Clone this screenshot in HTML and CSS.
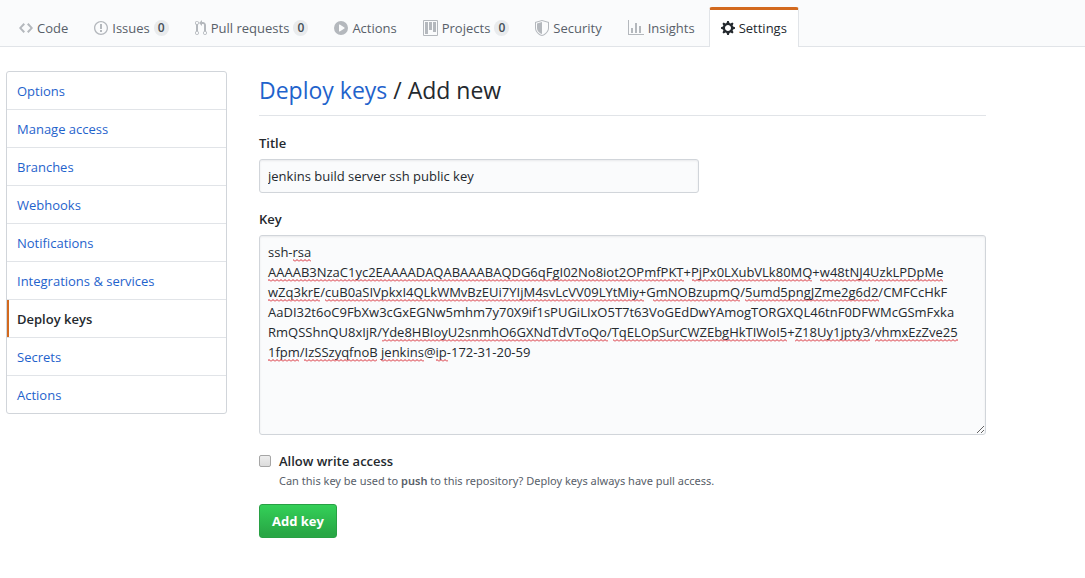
FILE: index.html
```html
<!DOCTYPE html>
<html lang="en">
<head>
<meta charset="utf-8">
<meta name="viewport" content="width=device-width, initial-scale=1">
<title>Add new deploy key</title>
<link rel="stylesheet" href="styles.css">
</head>
<body>
<header class="repo-head">
  <nav class="tabs" aria-label="Repository">
    <a class="tab" href="#code"><svg width="14" height="16" viewBox="0 0 14 16" aria-hidden="true"><path fill-rule="evenodd" d="M9.5 3L8 4.5 11.5 8 8 11.5 9.5 13 14 8 9.5 3zm-5 0L0 8l4.500 5L6 11.500 2.500 8 6 4.500 4.500 3z"/></svg><span>Code</span></a>
    <a class="tab" href="#issues"><svg width="14" height="16" viewBox="0 0 14 16" aria-hidden="true"><path fill-rule="evenodd" d="M7 2.300c3.140 0 5.700 2.560 5.700 5.700s-2.560 5.700-5.700 5.700A5.710 5.710 0 0 1 1.300 8c0-3.140 2.560-5.700 5.700-5.700zM7 1C3.140 1 0 4.140 0 8s3.140 7 7 7 7-3.140 7-7-3.140-7-7-7zm1 3H6v5h2V4zm0 6H6v2h2v-2z"/></svg><span>Issues</span><span class="counter">0</span></a>
    <a class="tab" href="#pulls"><svg width="12" height="16" viewBox="0 0 12 16" aria-hidden="true"><path fill-rule="evenodd" d="M11 11.280V5c-.03-.78-.34-1.470-.94-2.060C9.460 2.350 8.780 2.030 8 2H7V0L4 3l3 3V4h1c.27.02.48.11.69.31.21.2.3.42.31.69v6.280A1.993 1.993 0 0 0 10 15a1.993 1.993 0 0 0 1-3.720zm-1 2.920c-.66 0-1.200-.55-1.200-1.200 0-.65.55-1.200 1.200-1.200.65 0 1.200.55 1.200 1.200 0 .65-.55 1.200-1.200 1.200zM4 3c0-1.110-.89-2-2-2a1.993 1.993 0 0 0-1 3.720v6.560A1.993 1.993 0 0 0 2 15a1.993 1.993 0 0 0 1-3.720V4.720c.59-.34 1-.98 1-1.720zm-.8 10c0 .66-.55 1.200-1.200 1.200-.65 0-1.200-.55-1.200-1.200 0-.65.55-1.200 1.200-1.200.65 0 1.200.55 1.200 1.200zM2 4.200C1.340 4.200.8 3.650.8 3c0-.65.55-1.200 1.200-1.200.65 0 1.200.55 1.200 1.200 0 .65-.55 1.200-1.200 1.200z"/></svg><span>Pull requests</span><span class="counter">0</span></a>
    <a class="tab" href="#actions"><svg width="14" height="16" viewBox="0 0 14 16" aria-hidden="true"><path fill-rule="evenodd" d="M14 8A7 7 0 1 1 0 8a7 7 0 0 1 14 0zm-8.223 3.482l4.599-3.066a.5.5 0 0 0 0-.832L5.777 4.518A.5.5 0 0 0 5 4.934v6.132a.5.5 0 0 0 .777.416z"/></svg><span>Actions</span></a>
    <a class="tab" href="#projects"><svg width="15" height="16" viewBox="0 0 15 16" aria-hidden="true"><path fill-rule="evenodd" d="M10 12h3V2h-3v10zm-4-2h3V2H6v8zm-4 4h3V2H2v12zm-1 1h13V1H1v14zM14 0H1a1 1 0 0 0-1 1v14a1 1 0 0 0 1 1h13a1 1 0 0 0 1-1V1a1 1 0 0 0-1-1z"/></svg><span>Projects</span><span class="counter">0</span></a>
    <a class="tab" href="#security"><svg width="14" height="16" viewBox="0 0 14 16" aria-hidden="true"><path fill-rule="evenodd" d="M0 2l7-2 7 2v6.020C14 12.690 8.690 16 7 16c-1.690 0-7-3.310-7-7.980V2zm1 .75L7 1l6 1.750v5.268C13 12.104 8.449 15 7 15c-1.449 0-6-2.896-6-6.982V2.750zm1 .75L7 2v12c-1.207 0-5-2.482-5-5.985V3.500z"/></svg><span>Security</span></a>
    <a class="tab" href="#insights"><svg width="16" height="16" viewBox="0 0 16 16" aria-hidden="true"><path fill-rule="evenodd" d="M16 14v1H0V0h1v14h15zM5 13H3V8h2v5zm4 0H7V3h2v10zm4 0h-2V6h2v7z"/></svg><span>Insights</span></a>
    <a class="tab tab-selected" href="#settings" aria-current="page"><svg width="14" height="16" viewBox="0 0 14 16" aria-hidden="true"><path fill-rule="evenodd" d="M14 8.770v-1.600l-1.940-.64-.45-1.090.88-1.840-1.130-1.130-1.810.91-1.090-.45-.69-1.920h-1.600l-.63 1.940-1.110.45-1.840-.88-1.130 1.130.91 1.810-.45 1.090L0 7.230v1.590l1.940.64.45 1.090-.88 1.840 1.130 1.130 1.810-.91 1.090.45.69 1.920h1.590l.63-1.940 1.110-.45 1.840.88 1.130-1.130-.92-1.810.47-1.090L14 8.750v.02zM7 11c-1.660 0-3-1.340-3-3s1.340-3 3-3 3 1.340 3 3-1.340 3-3 3z"/></svg><span>Settings</span></a>
  </nav>
</header>
<div class="layout">
  <nav class="menu" aria-label="Settings">
    <a class="menu-item" href="#options">Options</a>
    <a class="menu-item" href="#access">Manage access</a>
    <a class="menu-item" href="#branches">Branches</a>
    <a class="menu-item" href="#webhooks">Webhooks</a>
    <a class="menu-item" href="#notifications">Notifications</a>
    <a class="menu-item" href="#integrations">Integrations &amp; services</a>
    <a class="menu-item menu-selected" href="#keys" aria-current="page">Deploy keys</a>
    <a class="menu-item" href="#secrets">Secrets</a>
    <a class="menu-item" href="#repo-actions">Actions</a>
  </nav>
  <main class="content">
    <h1 class="heading"><a href="#keys">Deploy keys</a> / Add new</h1>
    <form class="form">
      <label class="label" for="key-title">Title</label>
      <input class="field title-field" id="key-title" type="text" value="jenkins build server ssh public key" spellcheck="false">
      <label class="label" for="key-body">Key</label>
      <div class="key-box">
<textarea class="field key-field" id="key-body" spellcheck="false">ssh-rsa
AAAAB3NzaC1yc2EAAAADAQABAAABAQDG6qFgI02No8iot2OPmfPKT+PjPx0LXubVLk80MQ+w48tNJ4UzkLPDpMe
wZq3krE/cuB0aSIVpkxI4QLkWMvBzEUi7YIjM4svLcVV09LYtMiy+GmNOBzupmQ/5umd5pngJZme2g6d2/CMFCcHkF
AaDI32t6oC9FbXw3cGxEGNw5mhm7y70X9if1sPUGiLIxO5T7t63VoGEdDwYAmogTORGXQL46tnF0DFWMcGSmFxka
RmQSShnQU8xIjR/Yde8HBIoyU2snmhO6GXNdTdVToQo/TqELOpSurCWZEbgHkTIWoI5+Z18Uy1jpty3/vhmxEzZve25
1fpm/IzSSzyqfnoB jenkins@ip-172-31-20-59</textarea>
        <svg class="spelling" width="727" height="200" viewBox="0 0 727 200" aria-hidden="true">
          <defs>
            <pattern id="wave" width="4" height="4" patternUnits="userSpaceOnUse"><path d="M0 2.500L2 .5L4 2.500" fill="none" stroke="#d6202a"/></pattern>
          </defs>
          <g fill="url(#wave)">
            <rect x="34" y="24" width="18" height="4"/>
            <rect x="9" y="44" width="416" height="4"/>
            <rect x="433" y="44" width="120" height="4"/>
            <rect x="561" y="44" width="123" height="4"/>
            <rect x="9" y="64" width="52" height="4"/>
            <rect x="66" y="64" width="319" height="4"/>
            <rect x="394" y="64" width="87" height="4"/>
            <rect x="486" y="64" width="134" height="4"/>
            <rect x="123" y="104" width="226" height="4"/>
            <rect x="354" y="104" width="174" height="4"/>
            <rect x="536" y="104" width="75" height="4"/>
            <rect x="616" y="104" width="83" height="4"/>
            <rect x="9" y="124" width="31" height="4"/>
            <rect x="45" y="124" width="73" height="4"/>
            <rect x="122" y="124" width="43" height="4"/>
            <rect x="177" y="124" width="12" height="4"/>
          </g>
        </svg>
      </div>
      <div class="check-row">
        <input class="check" id="write" type="checkbox" aria-describedby="write-note">
        <div>
          <label class="label" for="write">Allow write access</label>
          <p class="note" id="write-note">Can this key be used to <strong>push</strong> to this repository? Deploy keys always have pull access.</p>
        </div>
      </div>
      <button class="submit" type="submit">Add key</button>
    </form>
  </main>
</div>
</body>
</html>
```
FILE: styles.css
```css
* {
  box-sizing: border-box;
}

body {
  margin: 0;
  background: #fff;
  color: #24292e;
  font: 13px/20px "Open Sans", "Noto Sans", sans-serif;
}

a {
  color: #1f63cc;
  text-decoration: none;
}

.repo-head {
  padding: 7px 7px 0;
  background: #fafbfc;
  border-bottom: 1px solid #e1e4e8;
}

.tabs {
  display: flex;
  gap: 2px;
  margin-bottom: -1px;
}

.tab {
  display: flex;
  align-items: center;
  gap: 4px;
  padding: 7px 11px 8px;
  border: 1px solid transparent;
  border-top-width: 3px;
  border-bottom: 0;
  border-radius: 3px 3px 0 0;
  height: 40px;
  color: #586069;
  white-space: nowrap;
}

.tab svg {
  flex: none;
  fill: #b4b8bd;
}

.tab-selected {
  background: #fff;
  border-color: #d2691e #e1e4e8 transparent;
  color: #24292e;
}

.tab-selected svg {
  fill: #24292e;
}

.counter {
  min-width: 15px;
  padding: 0 4px;
  border-radius: 20px;
  background: #e9ebed;
  color: #444d56;
  font-size: 12px;
  font-weight: 600;
  line-height: 16px;
  text-align: center;
}

.layout {
  display: grid;
  grid-template-columns: 221px minmax(0, 727px);
  column-gap: 32px;
  align-items: start;
  padding: 24px 6px;
}

.menu {
  border: 1px solid #d1d5da;
  border-radius: 3px;
  overflow: hidden;
}

.menu-item {
  display: block;
  padding: 9px 10px 8px;
  border-bottom: 1px solid #e1e4e8;
}

.menu-item:last-child {
  border-bottom: 0;
}

.menu-selected {
  color: #24292e;
  font-weight: 600;
  box-shadow: inset 2px 0 #d2691e;
}

.heading {
  margin: 0 0 17px;
  padding: 1px 0 7px;
  border-bottom: 1px solid #e1e4e8;
  font-size: 23px;
  font-weight: 400;
  line-height: 36px;
}

.form {
  display: flex;
  flex-direction: column;
  align-items: flex-start;
}

.label {
  display: block;
  font-weight: 600;
}

.field {
  margin: 0;
  border: 1px solid #d1d5da;
  border-radius: 3px;
  background: #fafbfc;
  box-shadow: inset 0 1px 2px rgba(27, 31, 35, .075);
  color: #24292e;
  font: inherit;
}

.title-field {
  width: 440px;
  max-width: 100%;
  height: 34px;
  margin: 6px 0 16px;
  padding: 6px 8px;
}

.key-box {
  position: relative;
  width: 100%;
  margin-top: 6px;
}

.key-field {
  display: block;
  width: 100%;
  height: 200px;
  padding: 6px 8px;
  resize: vertical;
  white-space: pre;
  overflow: hidden;
}

/* Spelling marks drawn over the key text */
.spelling {
  position: absolute;
  top: 0;
  left: 0;
  pointer-events: none;
}

.check-row {
  display: flex;
  gap: 8px;
  margin: 16px 0 13px;
}

.check {
  appearance: none;
  flex: none;
  width: 12px;
  height: 12px;
  margin: 4px 0 0;
  border: 1px solid #a6a6a6;
  border-radius: 2px;
  background: linear-gradient(#eee, #dcdcdc);
}

.check:checked {
  background: #0366d6;
}

.note {
  margin: 0;
  color: #586069;
  font-family: "Noto Sans", sans-serif;
  font-size: 11px;
}

.note strong {
  font-weight: 600;
}

.submit {
  height: 34px;
  padding: 0 12px;
  border: 1px solid #28a044;
  border-radius: 3px;
  background: linear-gradient(#34d058, #28a745 90%);
  color: #fff;
  font: inherit;
  font-weight: 700;
}
```
